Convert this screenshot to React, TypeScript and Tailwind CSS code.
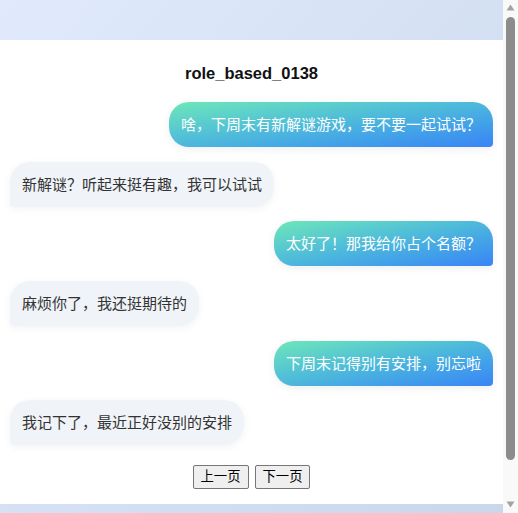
const messages = [
  { side: "right", text: "啥，下周末有新解谜游戏，要不要一起试试？" },
  { side: "left", text: "新解谜？听起来挺有趣，我可以试试" },
  { side: "right", text: "太好了！那我给你占个名额？" },
  { side: "left", text: "麻烦你了，我还挺期待的" },
  { side: "right", text: "下周末记得别有安排，别忘啦" },
  { side: "left", text: "我记下了，最近正好没别的安排" },
];

function Scrollbar() {
  return (
    <div className="flex w-[15px] shrink-0 flex-col items-center bg-[#f9f9f9] pt-[4px] pb-[5px]">
      <svg width="9" height="7" viewBox="0 0 9 7">
        <path d="M4.5 0.5 L8.5 6.5 L0.5 6.5 Z" fill="#a3a3a3" />
      </svg>
      <div className="mt-[6px] h-[443px] w-[9px] rounded-full bg-[#8c8c8c]" />
      <div className="flex-1" />
      <svg width="9" height="7" viewBox="0 0 9 7">
        <path d="M0.5 0.5 L8.5 0.5 L4.5 6.5 Z" fill="#a3a3a3" />
      </svg>
    </div>
  );
}

export default function App() {
  return (
    <div className="flex h-[513px] overflow-hidden font-['Liberation_Sans','Noto_Sans_CJK_SC',sans-serif]">
      <div className="min-w-0 flex-1 overflow-hidden">
        <div className="bg-gradient-to-br from-[#e0eafc] to-[#c9d6ea] pt-10 pb-[53px]">
          <div className="bg-white px-[10px] pt-[21px] pb-[15px]">
            <h2 className="text-center text-[16.5px] leading-6 font-bold text-[#111]">
              role_based_0138
            </h2>

            <div className="mt-[17px] flex flex-col gap-[14.7px]">
              {messages.map((m, i) =>
                m.side === "right" ? (
                  <div key={i} className="flex justify-end">
                    <div className="rounded-[20px] rounded-br-[4px] bg-gradient-to-br from-[#6ee7b7] to-[#3b82f6] px-3 py-3 text-[15px] leading-[21px] text-white shadow-[0_2px_8px_rgba(0,0,0,0.07)]">
                      {m.text}
                    </div>
                  </div>
                ) : (
                  <div key={i} className="flex justify-start">
                    <div className="rounded-[20px] rounded-bl-[4px] bg-[#f0f4f9] px-3 py-3 text-[15px] leading-[21px] text-[#333] shadow-[0_2px_8px_rgba(0,0,0,0.05)]">
                      {m.text}
                    </div>
                  </div>
                )
              )}
            </div>

            <div className="mt-5 flex justify-center gap-[6px]">
              <button className="rounded-[2px] border border-[#767676] bg-[#efefef] px-[7px] py-[1px] text-[13.33px] leading-[20px] text-black">
                上一页
              </button>
              <button className="rounded-[2px] border border-[#767676] bg-[#efefef] px-[7px] py-[1px] text-[13.33px] leading-[20px] text-black">
                下一页
              </button>
            </div>
          </div>
        </div>
      </div>
      <Scrollbar />
    </div>
  );
}
